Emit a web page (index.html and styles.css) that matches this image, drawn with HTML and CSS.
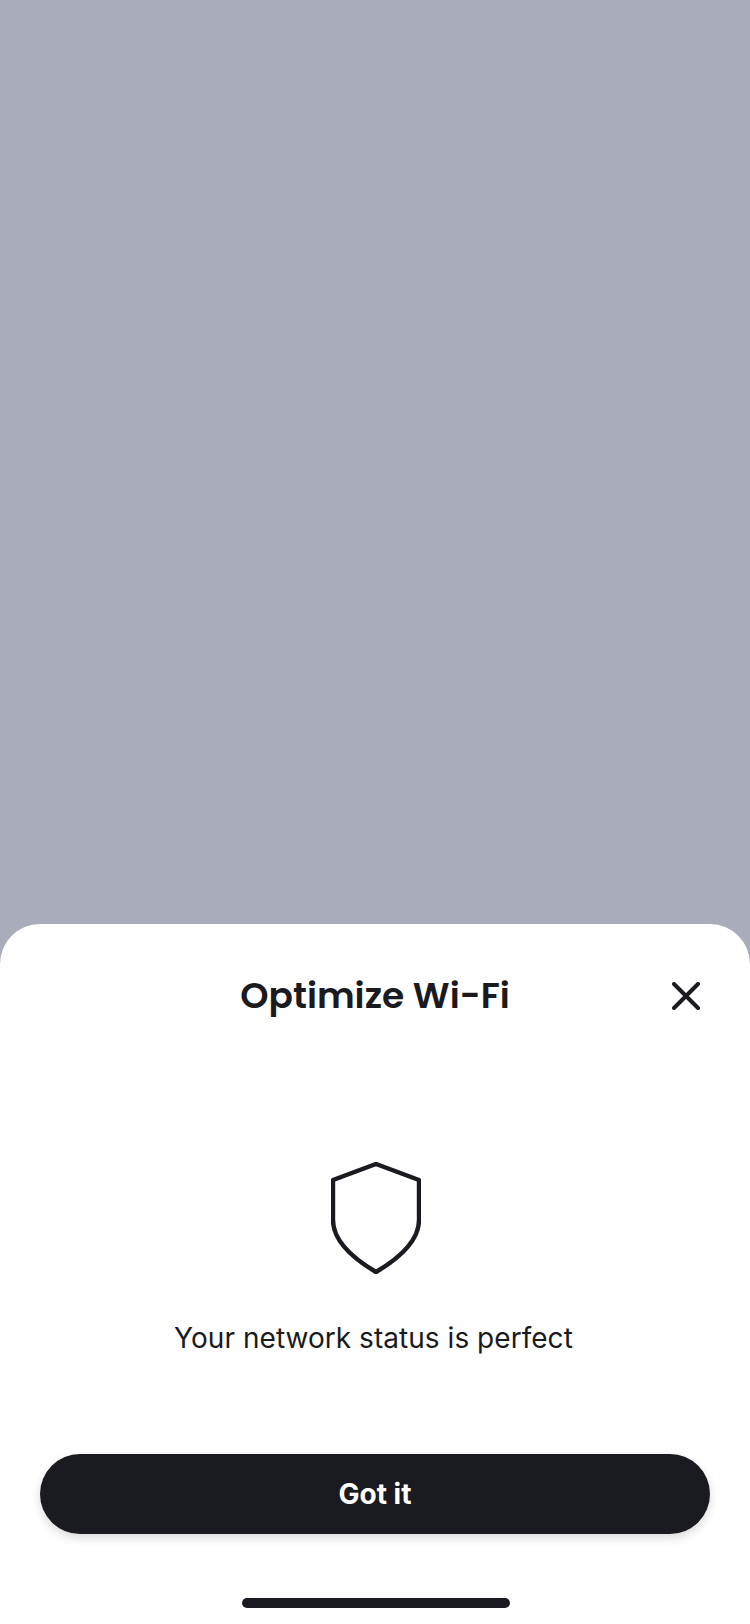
FILE: index.html
```html
<!DOCTYPE html>
<html lang="en">

<head>
    <meta charset="UTF-8">
    <meta name="viewport" content="width=device-width, initial-scale=1.0">
    <title>Optimize Wi-Fi</title>
    <link rel="stylesheet" href="styles.css">
</head>

<body>
    <div class="screen">
        <div class="backdrop"></div>
        <div class="sheet">
            <div class="sheet-header">
                <h1 class="title">Optimize Wi-Fi</h1>
                <button class="close" aria-label="Close">
                    <svg width="28" height="28" viewBox="0 0 28 28" fill="none">
                        <path d="M2 2L26 26M26 2L2 26" stroke="#1a1b20" stroke-width="4" stroke-linecap="round" />
                    </svg>
                </button>
            </div>
            <div class="status">
                <svg class="shield" width="90" height="112" viewBox="0 0 90 112" fill="none">
                    <path d="M45 2L88 18V58C88 79 67 97 45 110C23 97 2 79 2 58V18Z" stroke="#1a1b20" stroke-width="4.4"
                        stroke-linejoin="round" />
                </svg>
                <p class="status-text">Your network status is perfect</p>
            </div>
            <button class="primary">Got it</button>
            <div class="home-indicator"></div>
        </div>
    </div>
</body>

</html>
```

FILE: styles.css
```css
* {
    box-sizing: border-box;
}

body {
    margin: 0;
    font-family: "Inter", "Liberation Sans", sans-serif;
    color: #1a1b20;
}

.screen {
    display: flex;
    flex-direction: column;
    width: 750px;
    height: 1624px;
    background-color: #a9acbb;
}

.backdrop {
    flex: 1;
}

.sheet {
    display: flex;
    flex-direction: column;
    height: 700px;
    background-color: #ffffff;
    border-radius: 40px 40px 0 0;
}

.sheet-header {
    position: relative;
    padding-top: 48px;
    height: 238px;
}

.title {
    margin: 0;
    font-family: "Poppins", "Inter", sans-serif;
    font-size: 36px;
    font-weight: 600;
    line-height: 48px;
    text-align: center;
}

.close {
    position: absolute;
    top: 58px;
    right: 50px;
    padding: 0;
    border: 0;
    background: none;
    line-height: 0;
}

.status {
    display: flex;
    flex-direction: column;
    align-items: center;
}

.shield {
    margin-left: 2px;
}

.status-text {
    margin: 46px 3px 1px 0;
    font-size: 28px;
    font-weight: 400;
    letter-spacing: 0.04px;
    line-height: 36px;
}

.primary {
    margin: 97px 40px 0;
    height: 80px;
    border: 0;
    border-radius: 40px;
    background-color: #1a1b20;
    color: #ffffff;
    font-family: inherit;
    font-size: 28px;
    font-weight: 700;
    box-shadow: 0 4px 10px rgba(26, 27, 32, 0.16);
}

.home-indicator {
    align-self: center;
    width: 268px;
    height: 10px;
    margin: 64px 0 0 2px;
    border-radius: 5px;
    background-color: #1a1b20;
}
```
